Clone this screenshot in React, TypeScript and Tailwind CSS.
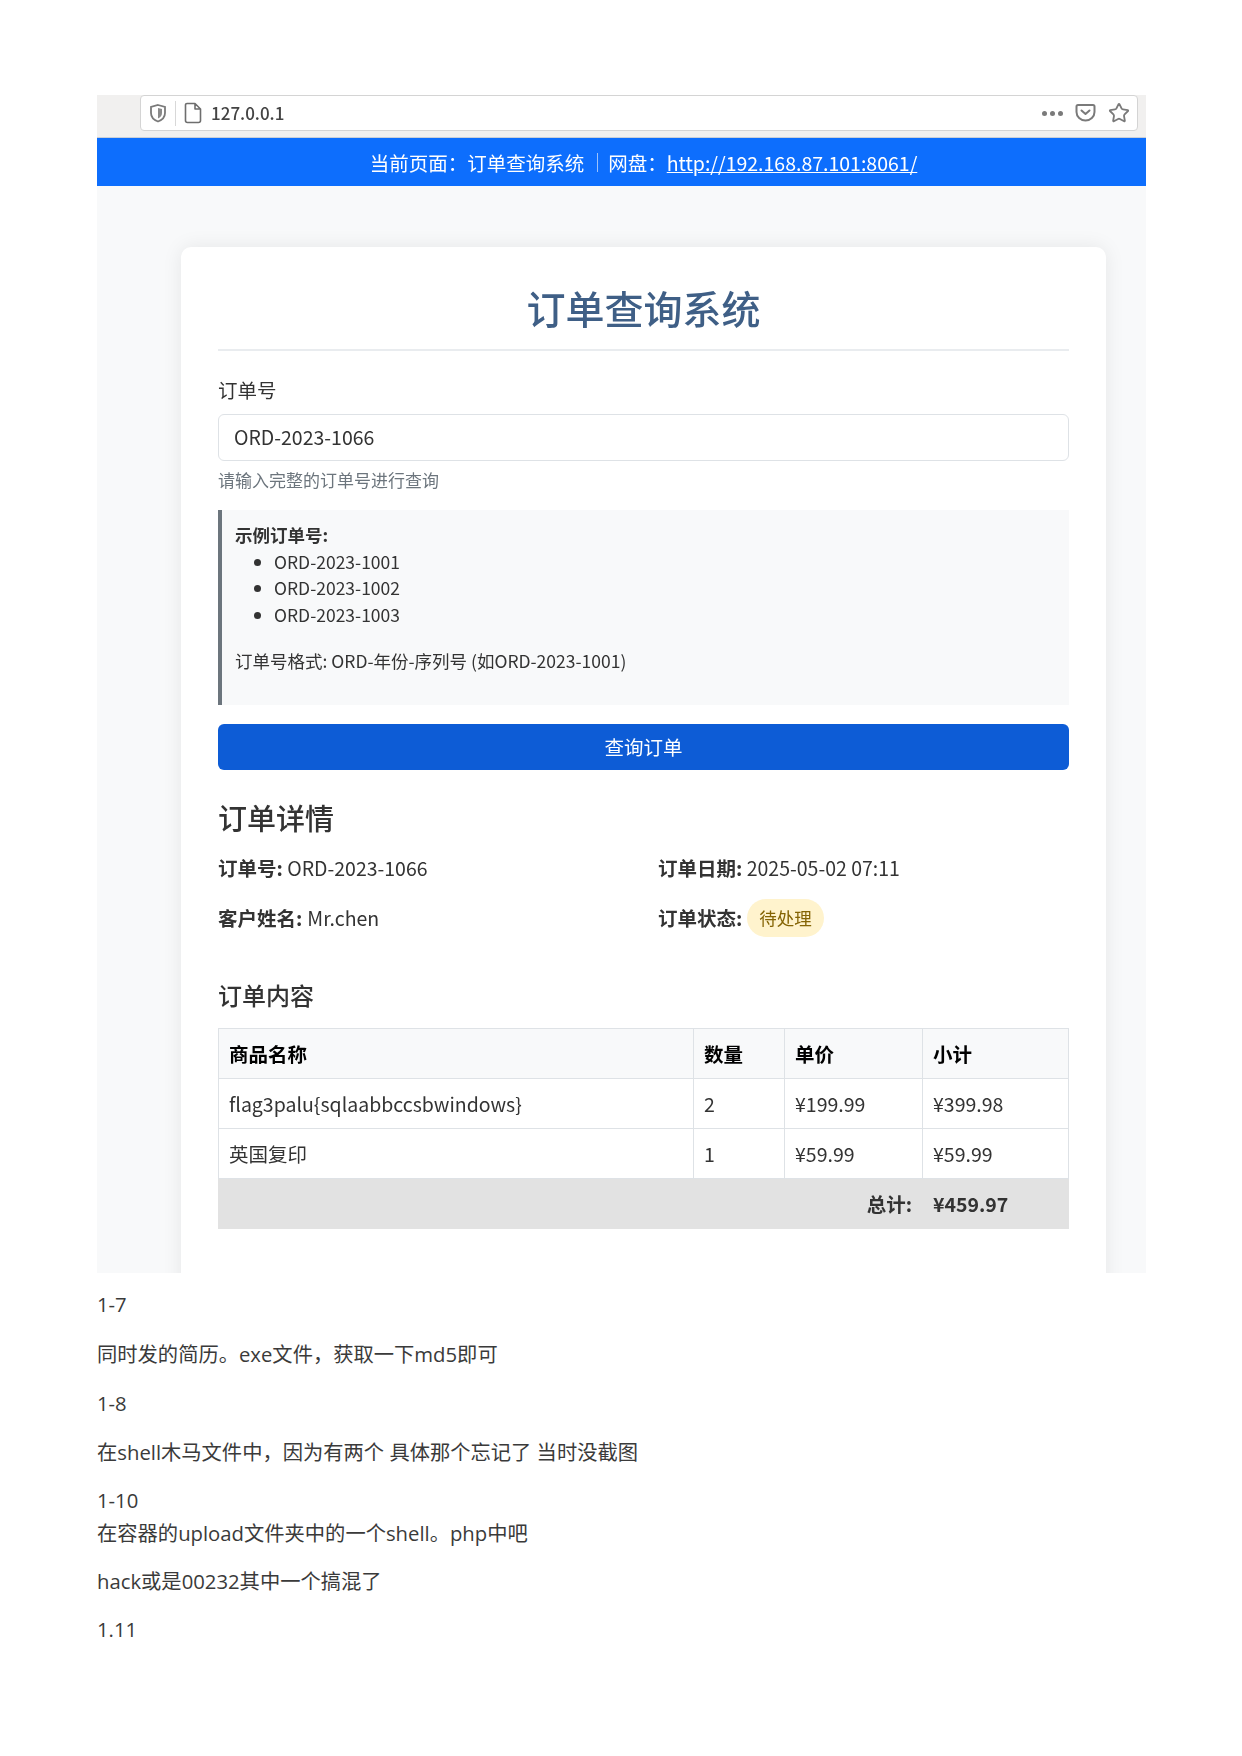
import { Star } from "lucide-react";

const items = [
  { name: "flag3palu{sqlaabbccsbwindows}", qty: "2", price: "¥199.99", subtotal: "¥399.98" },
  { name: "英国复印", qty: "1", price: "¥59.99", subtotal: "¥59.99" },
];

function BrowserBar() {
  return (
    <div className="h-[43px] shrink-0 bg-[#f1f0ef] pl-[43px] pr-[8px] border-b border-[#c9cfd8]">
      <div className="h-[36px] flex items-center bg-white border border-[#d4d4d4] rounded-[4px] pl-[8px] pr-[7px] text-[#5a5a5a]">
        <svg width="18" height="20" viewBox="0 0 18 20" fill="none" className="shrink-0">
          <path d="M9 2 L16 4 V10 C16 14 13 17 9 18.5 C5 17 2 14 2 10 V4 Z" stroke="#7a7a7a" strokeWidth="1.8" />
          <path d="M9 5 L13 6 V10 C13 12.5 11.5 14.5 9 15.5 Z" fill="#8a8a8a" />
        </svg>
        <div className="w-px h-[25px] bg-[#d8d8d8] ml-[8px] mr-[8px]" />
        <svg width="18" height="22" viewBox="0 0 18 22" fill="none" className="shrink-0">
          <path d="M3 1.5 H11 L16.5 7 V18.5 A2 2 0 0 1 14.5 20.5 H3.5 A2 2 0 0 1 1.5 18.5 V3 A1.5 1.5 0 0 1 3 1.5 Z M11 1.5 V7 H16.5" stroke="#6e6e6e" strokeWidth="1.6" strokeLinejoin="round" />
        </svg>
        <span className="ml-[9px] text-[17px] font-medium text-[#444]">127.0.0.1</span>
        <div className="ml-auto flex items-center gap-[12px]">
          <div className="flex gap-[3px]">
            <span className="w-[5px] h-[5px] rounded-full bg-[#7a7a7a]" />
            <span className="w-[5px] h-[5px] rounded-full bg-[#7a7a7a]" />
            <span className="w-[5px] h-[5px] rounded-full bg-[#7a7a7a]" />
          </div>
          <svg width="21" height="20" viewBox="0 0 21 20" fill="none">
            <path d="M3 2 H18 A1.5 1.5 0 0 1 19.5 3.5 V9 A9 8.5 0 0 1 1.5 9 V3.5 A1.5 1.5 0 0 1 3 2 Z" stroke="#7a7a7a" strokeWidth="2" />
            <path d="M6.5 7.5 L10.5 11 L14.5 7.5" stroke="#7a7a7a" strokeWidth="2" strokeLinecap="round" strokeLinejoin="round" />
          </svg>
          <Star size={22} strokeWidth={2} className="text-[#7a7a7a]" />
        </div>
      </div>
    </div>
  );
}

function OrderCard() {
  return (
    <div className="mx-[84px] mt-[61px] bg-white rounded-t-[10px] shadow-[0_0_20px_rgba(0,0,0,0.08)] px-[37px] pt-[32px] h-[1100px]">
      <h1 className="text-[39px] leading-[56px] font-medium text-[#3f5f86] text-center pb-[14px] border-b-2 border-[#e9ecef]">
        订单查询系统
      </h1>
      <label className="block mt-[25px] text-[19.5px] leading-[28px] text-[#333]">订单号</label>
      <div className="mt-[10px] h-[47px] flex items-center border border-[#dee2e6] rounded-[6px] px-[15px] pb-[2px] text-[19.5px] text-[#333]">
        ORD-2023-1066
      </div>
      <p className="mt-[6px] text-[17px] leading-[26px] text-[#6c757d]">请输入完整的订单号进行查询</p>

      <div className="mt-[17px] h-[195px] bg-[#f8f9fa] border-l-4 border-[#6c757d] pl-[13px] pt-[12px] text-[17.5px] leading-[26.5px] text-[#333]">
        <div className="font-bold">示例订单号:</div>
        <ul className="list-disc pl-[39px]">
          <li>ORD-2023-1001</li>
          <li>ORD-2023-1002</li>
          <li>ORD-2023-1003</li>
        </ul>
        <p className="mt-[20px]">订单号格式: ORD-年份-序列号 (如ORD-2023-1001)</p>
      </div>

      <button className="block w-full mt-[19px] h-[46px] bg-[#0d5cd6] rounded-[6px] text-white text-[19.5px]">
        查询订单
      </button>

      <h2 className="mt-[25px] text-[29px] leading-[44px] font-medium text-[#333]">订单详情</h2>

      <div className="mt-[15px] grid grid-cols-[440px_1fr] text-[19.5px] text-[#333]">
        <div className="h-[45px] leading-[28px]"><b>订单号:</b> ORD-2023-1066</div>
        <div className="h-[45px] leading-[28px]"><b>订单日期:</b> 2025-05-02 07:11</div>
        <div className="h-[38px] flex items-center"><b>客户姓名:</b><span className="ml-[5px]">Mr.chen</span></div>
        <div className="h-[38px] flex items-center">
          <b>订单状态:</b>
          <span className="ml-[5px] h-[38px] px-[12px] flex items-center rounded-full bg-[#fff3cd] text-[#856404] text-[17.5px]">待处理</span>
        </div>
      </div>

      <h3 className="mt-[40px] text-[24px] leading-[36px] font-medium text-[#333]">订单内容</h3>

      <table className="mt-[15px] w-full table-fixed border-collapse text-[19.5px] text-[#333]">
        <colgroup>
          <col className="w-[475px]" />
          <col className="w-[91px]" />
          <col className="w-[138px]" />
          <col />
        </colgroup>
        <thead>
          <tr className="h-[50px] bg-[#f8f9fa] font-bold text-black">
            <th className="border border-[#dee2e6] px-[10px] text-left">商品名称</th>
            <th className="border border-[#dee2e6] px-[10px] text-left">数量</th>
            <th className="border border-[#dee2e6] px-[10px] text-left">单价</th>
            <th className="border border-[#dee2e6] px-[10px] text-left">小计</th>
          </tr>
        </thead>
        <tbody>
          {items.map((item) => (
            <tr key={item.name} className="h-[50px]">
              <td className="border border-[#dee2e6] px-[10px]">{item.name}</td>
              <td className="border border-[#dee2e6] px-[10px]">{item.qty}</td>
              <td className="border border-[#dee2e6] px-[10px]">{item.price}</td>
              <td className="border border-[#dee2e6] px-[10px]">{item.subtotal}</td>
            </tr>
          ))}
          <tr className="h-[50px] bg-[#e2e2e2] font-bold">
            <td colSpan={3} className="border border-[#e2e2e2] px-[10px] text-right">总计:</td>
            <td className="border border-[#e2e2e2] px-[10px]">¥459.97</td>
          </tr>
        </tbody>
      </table>
    </div>
  );
}

export default function App() {
  return (
    <div className="w-[1242px] h-[1756px] bg-white overflow-hidden pt-[95px] px-[97px] font-['Noto_Sans_CJK_SC',sans-serif]">
      <div className="w-[1049px] h-[1178px] overflow-hidden bg-[#f8f9fa] flex flex-col blur-[0.4px]">
        <BrowserBar />
        <div className="w-[1093px] shrink-0">
          <div className="h-[48px] pt-[1px] bg-[#0d6efd] flex items-center justify-center text-white text-[19.5px]">
            当前页面：订单查询系统
            <span className="w-px h-[19px] bg-[#9cc2fb] ml-[13px] mr-[10px]" />
            网盘：
            <a className="underline">http://192.168.87.101:8061/</a>
          </div>
          <OrderCard />
        </div>
      </div>

      <div className="font-['Open_Sans','Noto_Sans_CJK_SC',sans-serif] text-[20.3px] leading-[30px] text-[#3a3a3a]">
        <p className="mt-[16px]">1-7</p>
        <p className="mt-[20px]">同时发的简历。exe文件，获取一下md5即可</p>
        <p className="mt-[19px]">1-8</p>
        <p className="mt-[19px]">在shell木马文件中，因为有两个 具体那个忘记了 当时没截图</p>
        <p className="mt-[18px]">1-10</p>
        <p className="mt-[3px]">在容器的upload文件夹中的一个shell。php中吧</p>
        <p className="mt-[18px]">hack或是00232其中一个搞混了</p>
        <p className="mt-[18px]">1.11</p>
      </div>
    </div>
  );
}
